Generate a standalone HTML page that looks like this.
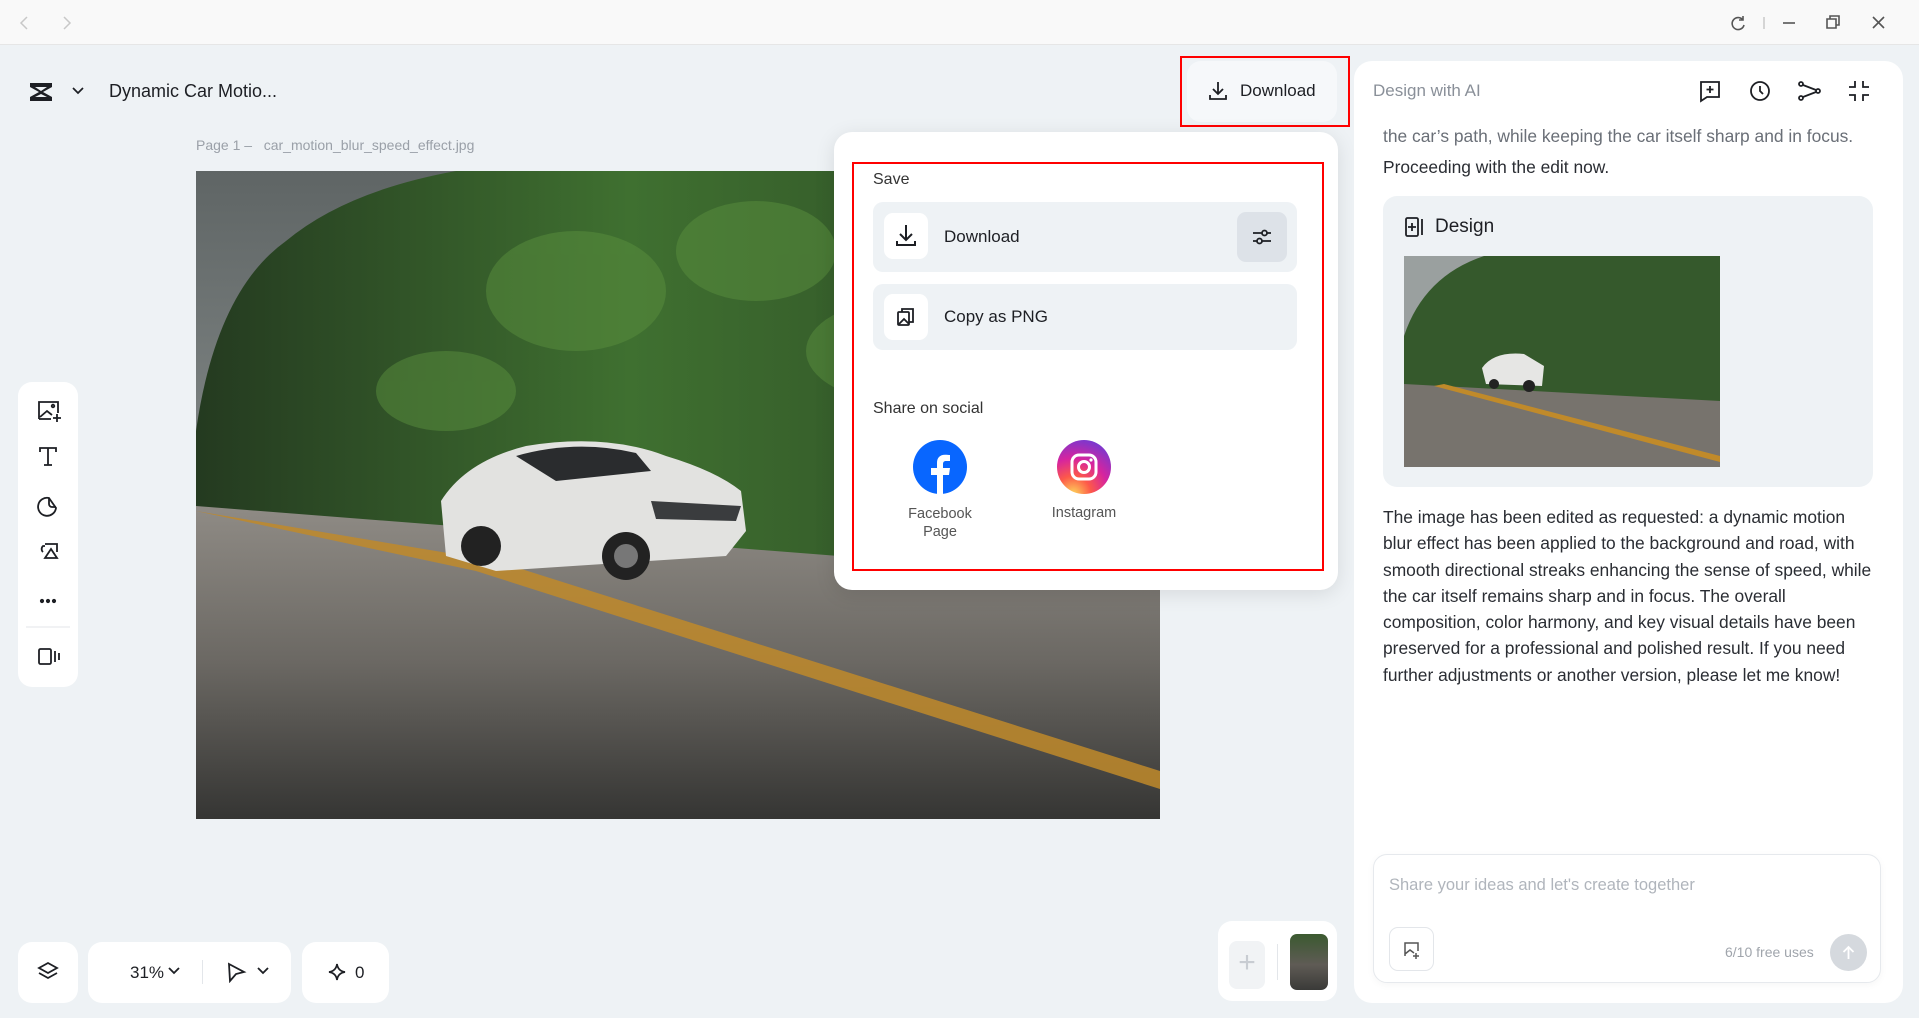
<!DOCTYPE html>
<html><head><meta charset="utf-8">
<style>
*{box-sizing:border-box;margin:0;padding:0}
body{width:1919px;height:1018px;overflow:hidden;background:#eef2f5;font-family:"Liberation Sans",sans-serif;color:#1d1f24;position:relative}
.abs{position:absolute}
.top{left:0;top:0;width:1919px;height:45px;background:#f9f9f9;border-bottom:1px solid #e6e6e6}
.card{background:#fff;border-radius:14px}
svg{display:block}
.chat{font-size:17.4px;line-height:26.3px;color:#2a2d33}
</style></head><body>
<div class="abs top">
 <svg class="abs" style="left:18px;top:14px" width="70" height="18" viewBox="0 0 70 18" fill="none" stroke="#c8c8c8" stroke-width="1.5"><path d="M9 3 3 9l6 6"/><path d="M46 3l6 6-6 6"/></svg>
 <svg class="abs" style="left:1726px;top:12px" width="170" height="22" viewBox="0 0 170 22" fill="none" stroke="#555" stroke-width="1.6"><path d="M17 8a6 6 0 1 0 1 5"/><path d="M17 4v4h-4"/><path d="M38 5v12" stroke="#ccc"/><path d="M57 11h12"/><path d="M101 7h9v9h-9z"/><path d="M104 7V4h9v9h-3"/><path d="M147 5l11 11M158 5l-11 11"/></svg>
</div>

<div class="abs" style="left:15px;top:61px;width:279px;height:61px;background:#eef2f5;border-radius:14px"></div>
<svg class="abs" style="left:28px;top:81px" width="26" height="22" viewBox="0 0 26 22"><path d="M2 2h22v4L15 11l9 5v4H2v-4l9-5-9-5z" fill="#1d1f24"/><path d="M7 6h12L13 10z" fill="#eef2f5"/><path d="M7 16h12l-6-3z" fill="#eef2f5"/></svg>
<svg class="abs" style="left:71px;top:86px" width="14" height="10" viewBox="0 0 14 10" fill="none" stroke="#1d1f24" stroke-width="1.7"><path d="M2 2l5 5 5-5"/></svg>
<div class="abs" style="left:109px;top:81px;font-size:18px">Dynamic Car Motio...</div>
<div class="abs" style="left:196px;top:137px;font-size:14px;color:#9aa0a8">Page 1 –&nbsp;&nbsp; car_motion_blur_speed_effect.jpg</div>

<svg class="abs" style="left:196px;top:171px" width="964" height="648" viewBox="0 0 964 648" preserveAspectRatio="none">
 <defs>
  <linearGradient id="sky" x1="0" y1="0" x2="0" y2="1"><stop offset="0" stop-color="#5f6565"/><stop offset="1" stop-color="#a4aaa8"/></linearGradient>
  <linearGradient id="road" x1="0" y1="0" x2="0" y2="1"><stop offset="0" stop-color="#8f8b85"/><stop offset="0.5" stop-color="#6b6863"/><stop offset="1" stop-color="#353533"/></linearGradient>
  <linearGradient id="tree" x1="0" y1="0" x2="1" y2="0"><stop offset="0" stop-color="#243a20"/><stop offset="0.45" stop-color="#3f7030"/><stop offset="1" stop-color="#2a4624"/></linearGradient>
 </defs>
 <rect width="964" height="648" fill="url(#sky)"/>
 <path d="M0 260 Q20 120 90 70 Q150 20 260 0 L964 0 L964 420 L0 340z" fill="url(#tree)"/>
 <g fill="#5a8f3e" opacity="0.5"><ellipse cx="380" cy="120" rx="90" ry="60"/><ellipse cx="560" cy="80" rx="80" ry="50"/><ellipse cx="250" cy="220" rx="70" ry="40"/><ellipse cx="700" cy="180" rx="90" ry="50"/></g>
 <path d="M0 335 L964 410 L964 648 L0 648z" fill="url(#road)"/>
 <path d="M0 340 L300 390 L964 600 L964 618 L280 400z" fill="#c08a2a" opacity="0.85"/>
 <path d="M245 330 Q270 290 330 275 Q410 262 470 285 Q520 300 545 320 L550 360 L530 385 L300 400 L250 385z" fill="#e2e2e0"/>
 <path d="M320 285 Q380 268 440 282 L455 300 L360 310z" fill="#2a2c2e"/>
 <path d="M455 330 L545 335 L540 350 L460 348z" fill="#3a3c3e"/>
 <circle cx="285" cy="375" r="20" fill="#222"/><circle cx="430" cy="385" r="24" fill="#222"/>
 <circle cx="430" cy="385" r="12" fill="#777"/>
</svg>

<div class="abs card" style="left:18px;top:382px;width:60px;height:305px"></div>
<svg class="abs" style="left:18px;top:382px" width="60" height="305" viewBox="0 0 60 305" fill="none" stroke="#1d1f24" stroke-width="1.8">
 <path d="M21 37V20h19v11M21 37h12"/><path d="M22 35l7-6 5 4"/><circle cx="35" cy="24" r="1.3"/><path d="M39 32v8M35 36h8"/>
 <path d="M22 70v-4h16v4M30 66v17M26 83h8"/>
 <path d="M38 126a9 9 0 1 1-7-10l7 10z"/><path d="M31 116v6a3 3 0 0 0 3 3h4"/>
 <path d="M25 170a4 4 0 0 1 0-6h2M27 162h12v8M27 176l6-9 6 9z"/>
 <circle cx="24" cy="219" r="1.2" fill="#1d1f24"/><circle cx="30" cy="219" r="1.2" fill="#1d1f24"/><circle cx="36" cy="219" r="1.2" fill="#1d1f24"/>
 <path d="M8 245h44" stroke="#e3e6ea" stroke-width="1"/>
 <rect x="21" y="267" width="12" height="15" rx="1.5"/><path d="M37 269v11M41 271v7"/>
</svg>

<div class="abs card" style="left:18px;top:942px;width:60px;height:61px"></div>
<svg class="abs" style="left:36px;top:960px" width="24" height="24" viewBox="0 0 24 24" fill="none" stroke="#1d1f24" stroke-width="1.8"><path d="M12 3l9 5-9 5-9-5z"/><path d="M3 13l9 5 9-5"/></svg>
<div class="abs card" style="left:88px;top:942px;width:203px;height:61px"></div>
<div class="abs" style="left:130px;top:963px;font-size:17px">31%</div>
<svg class="abs" style="left:167px;top:966px" width="14" height="10" viewBox="0 0 14 10" fill="none" stroke="#1d1f24" stroke-width="1.8"><path d="M2 2l5 5 5-5"/></svg>
<div class="abs" style="left:202px;top:960px;width:1px;height:24px;background:#e3e6ea"></div>
<svg class="abs" style="left:226px;top:961px" width="46" height="22" viewBox="0 0 46 22" fill="none" stroke="#1d1f24" stroke-width="1.8"><path d="M3 3l15 8-8 2-6 7z"/><path d="M32 7l5 5 5-5"/></svg>
<div class="abs card" style="left:302px;top:942px;width:87px;height:61px"></div>
<svg class="abs" style="left:328px;top:963px" width="18" height="18" viewBox="0 0 18 18" fill="none" stroke="#1d1f24" stroke-width="1.7"><path d="M9 1q1 7 8 8-7 1-8 8-1-7-8-8 7-1 8-8z"/></svg>
<div class="abs" style="left:355px;top:963px;font-size:17px">0</div>

<div class="abs card" style="left:1218px;top:921px;width:119px;height:80px"></div>
<div class="abs" style="left:1229px;top:941px;width:36px;height:48px;background:#f1f3f5;border-radius:8px;color:#c8ccd2;font-size:30px;text-align:center;line-height:44px">+</div>
<div class="abs" style="left:1277px;top:944px;width:1px;height:36px;background:#e3e6ea"></div>
<div class="abs" style="left:1290px;top:934px;width:38px;height:56px;border-radius:7px;background:linear-gradient(#3b5a30,#5f5b55 55%,#3a3a38)"></div>

<div class="abs" style="left:1187px;top:61px;width:150px;height:61px;background:#f6f8fa;border-radius:14px"></div>
<svg class="abs" style="left:1207px;top:80px" width="22" height="22" viewBox="0 0 22 22" fill="none" stroke="#1d1f24" stroke-width="1.8"><path d="M11 2v12M6 9l5 5 5-5M3 15v4h16v-4"/></svg>
<div class="abs" style="left:1240px;top:81px;font-size:17px">Download</div>
<div class="abs" style="left:1180px;top:56px;width:170px;height:71px;border:2px solid #f00"></div>

<div class="abs" style="left:834px;top:132px;width:504px;height:458px;background:#fff;border-radius:18px;box-shadow:0 4px 20px rgba(0,0,0,.1)"></div>
<div class="abs" style="left:873px;top:171px;font-size:16px;color:#333">Save</div>
<div class="abs" style="left:873px;top:202px;width:424px;height:70px;background:#eef2f5;border-radius:10px"></div>
<div class="abs" style="left:884px;top:213px;width:44px;height:46px;background:#fff;border-radius:9px"></div>
<svg class="abs" style="left:894px;top:223px" width="24" height="26" viewBox="0 0 24 26" fill="none" stroke="#1d1f24" stroke-width="2"><path d="M12 2v15M6 11l6 6 6-6M3 18v4h18v-4"/></svg>
<div class="abs" style="left:944px;top:227px;font-size:17px">Download</div>
<div class="abs" style="left:1237px;top:212px;width:50px;height:50px;background:#dde2e8;border-radius:9px"></div>
<svg class="abs" style="left:1250px;top:225px" width="24" height="24" viewBox="0 0 24 24" fill="none" stroke="#1d1f24" stroke-width="1.8"><path d="M3 8h9M17 8h4M3 16h4M12 16h9"/><circle cx="14.5" cy="8" r="2.5"/><circle cx="9.5" cy="16" r="2.5"/></svg>
<div class="abs" style="left:873px;top:284px;width:424px;height:66px;background:#eef2f5;border-radius:10px"></div>
<div class="abs" style="left:884px;top:294px;width:44px;height:46px;background:#fff;border-radius:9px"></div>
<svg class="abs" style="left:896px;top:306px" width="20" height="22" viewBox="0 0 20 22" fill="none" stroke="#1d1f24" stroke-width="1.8"><rect x="2" y="6" width="11" height="13" rx="1"/><path d="M6 6V3h11v13h-4"/><path d="M3 18l5-5 5 5"/></svg>
<div class="abs" style="left:944px;top:307px;font-size:17px">Copy as PNG</div>
<div class="abs" style="left:873px;top:400px;font-size:16px;color:#333">Share on social</div>
<svg class="abs" style="left:913px;top:440px" width="54" height="54" viewBox="0 0 54 54"><circle cx="27" cy="27" r="27" fill="#0866ff"/><path d="M30 54V35h6l1-7h-7v-4c0-2 1-3 3-3h4v-6c-1 0-3-.3-5-.3-5 0-8 3-8 8v5.3h-6v7h6v19z" fill="#fff"/></svg>
<svg class="abs" style="left:1057px;top:440px" width="54" height="54" viewBox="0 0 54 54"><defs><radialGradient id="ig" cx="0.3" cy="1" r="1.1"><stop offset="0" stop-color="#fdd55a"/><stop offset="0.3" stop-color="#fd5949"/><stop offset="0.6" stop-color="#d6249f"/><stop offset="1" stop-color="#6a3bd6"/></radialGradient></defs><circle cx="27" cy="27" r="27" fill="url(#ig)"/><rect x="15" y="15" width="24" height="24" rx="7" fill="none" stroke="#fff" stroke-width="3"/><circle cx="27" cy="27" r="5.5" fill="none" stroke="#fff" stroke-width="3"/><circle cx="34" cy="20" r="1.6" fill="#fff"/></svg>
<div class="abs" style="left:890px;top:505px;width:100px;text-align:center;font-size:14.5px;line-height:18px;color:#555">Facebook<br>Page</div>
<div class="abs" style="left:1034px;top:505px;width:100px;text-align:center;font-size:14.5px;color:#555">Instagram</div>
<div class="abs" style="left:852px;top:162px;width:472px;height:409px;border:2px solid #f00"></div>

<div class="abs" style="left:1354px;top:61px;width:549px;height:942px;background:#fff;border-radius:18px"></div>
<div class="abs" style="left:1373px;top:81px;font-size:17px;color:#8a9099">Design with AI</div>
<svg class="abs" style="left:1697px;top:78px" width="180" height="26" viewBox="0 0 180 26" fill="none" stroke="#1d1f24" stroke-width="1.8">
 <path d="M4 4h18v15H10l-6 4z"/><path d="M13 8v7M9.5 11.5h7"/>
 <circle cx="63" cy="13" r="9"/><path d="M63 8v5l3 3"/>
 <circle cx="104" cy="6" r="2"/><circle cx="104" cy="20" r="2"/><circle cx="121" cy="13" r="2"/><path d="M106 7l13 5M106 19l13-5"/>
 <path d="M158 3v6h-6M166 3v6h6M158 23v-6h-6M166 23v-6h6"/>
</svg>
<div class="abs chat" style="left:1383px;top:123px;color:#6a6f77">the car’s path, while keeping the car itself sharp and in focus.</div>
<div class="abs chat" style="left:1383px;top:154px">Proceeding with the edit now.</div>
<div class="abs" style="left:1383px;top:196px;width:490px;height:291px;background:#eef2f5;border-radius:14px"></div>
<svg class="abs" style="left:1404px;top:216px" width="22" height="22" viewBox="0 0 22 22" fill="none" stroke="#1d1f24" stroke-width="1.8"><rect x="2" y="2" width="12" height="18" rx="1.5"/><path d="M8 7v8M4 11h8M18 3v16"/></svg>
<div class="abs" style="left:1435px;top:216px;font-size:19px">Design</div>
<svg class="abs" style="left:1404px;top:256px" width="316" height="211" viewBox="0 0 316 211" preserveAspectRatio="none">
 <rect width="316" height="211" fill="#9aa09f"/>
 <path d="M0 80 Q20 20 80 0 L316 0 L316 150 L0 130z" fill="#35592c"/>
 <path d="M0 128 L316 145 L316 211 L0 211z" fill="#77736d"/>
 <path d="M40 128 L316 200 L316 206 L30 130z" fill="#c08a2a"/>
 <path d="M78 112 Q90 95 120 98 L140 110 L138 130 L82 128z" fill="#e6e6e4"/>
 <circle cx="90" cy="128" r="5" fill="#222"/><circle cx="125" cy="130" r="6" fill="#222"/>
</svg>
<div class="abs chat" style="left:1383px;top:504px;width:492px">The image has been edited as requested: a dynamic motion blur effect has been applied to the background and road, with smooth directional streaks enhancing the sense of speed, while the car itself remains sharp and in focus. The overall composition, color harmony, and key visual details have been preserved for a professional and polished result. If you need further adjustments or another version, please let me know!</div>

<div class="abs" style="left:1373px;top:854px;width:508px;height:129px;background:#fff;border:1px solid #e6e9ed;border-radius:14px;box-shadow:0 2px 8px rgba(0,0,0,.04)"></div>
<div class="abs" style="left:1389px;top:876px;font-size:16.5px;color:#b0b5bc">Share your ideas and let's create together</div>
<div class="abs" style="left:1389px;top:927px;width:45px;height:44px;border:1px solid #e3e6ea;border-radius:9px"></div>
<svg class="abs" style="left:1402px;top:940px" width="20" height="20" viewBox="0 0 20 20" fill="none" stroke="#555" stroke-width="1.5"><path d="M3 16V3h13v8M3 14l5-4 4 3"/><path d="M14 13v6M11 16h6"/></svg>
<div class="abs" style="left:1725px;top:944px;font-size:14px;color:#a0a5ac">6/10 free uses</div>
<div class="abs" style="left:1830px;top:934px;width:37px;height:37px;border-radius:50%;background:#d5d9de"></div>
<svg class="abs" style="left:1840px;top:944px" width="17" height="17" viewBox="0 0 17 17" fill="none" stroke="#fff" stroke-width="1.8"><path d="M8.5 15V3M3.5 8l5-5 5 5"/></svg>
</body></html>
